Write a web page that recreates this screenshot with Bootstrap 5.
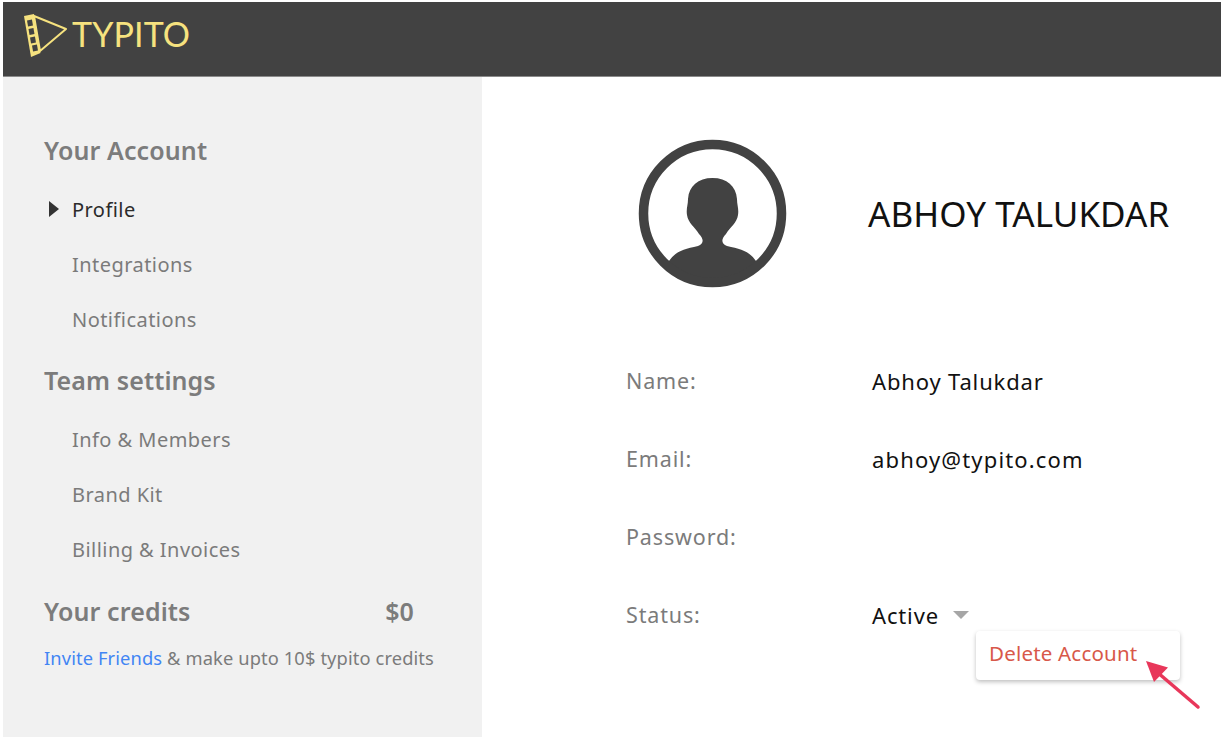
<!DOCTYPE html>
<html lang="en"><head><meta charset="utf-8"><title>Typito</title>
<link href="https://cdn.jsdelivr.net/npm/bootstrap@5.3.0/dist/css/bootstrap.min.css" rel="stylesheet">
<style>
html,body{height:742px;overflow:hidden;background:#fff}
body{font-family:"Noto Sans","Open Sans",sans-serif;padding:2px 3px 5px;letter-spacing:.45px}
.topbar{height:75px;background:#424242;border-bottom:1px solid #8a8a8a;padding:0 0 7px 20px}
.brandname{font-family:"Lato",sans-serif;font-size:34px;line-height:1;color:#f6e27f;letter-spacing:.1px;margin:0 0 4px 1px}
.workspace{height:660px}
.sidepanel{width:479px;background:#f1f1f1;padding:56px 0 0 41px;flex:none}
.sidehead{font-size:25px;line-height:34px;font-weight:600;color:#7c7c7c;margin:0;letter-spacing:.1px}
.sidelink{font-size:20px;line-height:27px;color:#7b7b7b;margin-top:28px;padding-left:28px;position:relative}
.sidehead + .sidelink{margin-top:29px}
.sidelink.current{color:#2b2b2b}
.caret-right{width:0;height:0;border-left:10px solid #333;border-top:8.5px solid transparent;border-bottom:8.5px solid transparent;margin-left:5px}
.caret-slot{position:absolute;left:0;top:5px}
.headgap{margin-top:30px}
.creditrow{width:370px;margin-top:31px}
.invite{font-size:18.3px;line-height:25px;color:#7b7b7b;margin-top:17px;letter-spacing:.12px;white-space:nowrap}
.invite a{color:#4285f4;text-decoration:none}
.mainpane{padding:62px 0 0 144px;position:relative}
.profilehead{height:150px;gap:81px;padding-left:12px}
.fullname{font-size:35px;line-height:48px;color:#111;font-weight:400;margin:0;letter-spacing:.05px;white-space:nowrap}
.inforow{height:78px;align-items:center;font-size:22px;color:#111;margin:0;letter-spacing:.85px}
.infolabel{width:246px;color:#7b7b7b;flex:none;font-size:21.5px}
.mailvalue{letter-spacing:1.15px}
.infolist{margin-top:53px}
.caret-down{width:0;height:0;border-top:8px solid #a6a6a6;border-left:8.5px solid transparent;border-right:8.5px solid transparent;margin-left:14px}
.delmenu{position:absolute;left:494px;top:554px;width:204px;height:49px;background:#fff;border-radius:4px;box-shadow:0 2px 4px rgba(0,0,0,.25);color:#d8584a;font-size:20.5px;line-height:45px;padding-left:13px;white-space:nowrap;letter-spacing:.2px}
.pointer{position:absolute;left:661px;top:581px;overflow:visible}
</style></head>
<body>
<header class="topbar d-flex align-items-center">
<svg width="48" height="44" viewBox="0 0 48 44" fill="none" aria-label="Typito logo">
<path d="M11 2 L43 15 L17 37 Z" stroke="#f6e27f" stroke-width="2" stroke-linejoin="round"/>
<path d="M1 2 L11 0 L17.500 39 L8 43 Z" fill="#f6e27f"/>
<g fill="#424242"><rect x="4.500" y="6" width="5" height="6" transform="rotate(-10 7 9)"/><rect x="6" y="14.500" width="5" height="6" transform="rotate(-10 8.500 17.500)"/><rect x="7.500" y="23" width="5" height="6" transform="rotate(-10 10 26)"/><rect x="9.500" y="31" width="5" height="6" transform="rotate(-10 12 34)"/></g>
</svg>
<span class="brandname">TYPITO</span>
</header>
<div class="workspace d-flex">
<aside class="sidepanel">
<h2 class="sidehead">Your Account</h2>
<div class="sidelink current"><span class="caret-slot"><span class="caret-right d-block"></span></span>Profile</div>
<div class="sidelink">Integrations</div>
<div class="sidelink">Notifications</div>
<h2 class="sidehead headgap">Team settings</h2>
<div class="sidelink">Info &amp; Members</div>
<div class="sidelink">Brand Kit</div>
<div class="sidelink">Billing &amp; Invoices</div>
<div class="creditrow d-flex justify-content-between"><h2 class="sidehead">Your credits</h2><span class="sidehead">$0</span></div>
<div class="invite"><a href="#">Invite Friends</a> &amp; make upto 10$ typito credits</div>
</aside>
<main class="mainpane flex-grow-1">
<div class="profilehead d-flex align-items-center">
<svg width="149" height="150" viewBox="0 0 149 150" aria-label="Avatar">
<defs><clipPath id="clipc"><circle cx="74.500" cy="74.500" r="67"/></clipPath></defs>
<g clip-path="url(#clipc)" fill="#424242">
<path d="M74.500 39 C60 39 51 47 50 60 C50 66 48 70 49 76 C50 84 57 88 61 95 C66 100 66 105 60 107 C46 110 38 112 31 122 L10 150 H139 L118 122 C111 112 103 110 89 107 C83 105 83 100 88 95 C92 88 99 84 100 76 C101 70 99 66 99 60 C98 47 89 39 74.500 39 Z"/>
</g>
<circle cx="74.500" cy="74.500" r="69" fill="none" stroke="#424242" stroke-width="9.500"/>
</svg>
<h1 class="fullname">ABHOY TALUKDAR</h1>
</div>
<div class="infolist">
<div class="inforow d-flex"><span class="infolabel">Name:</span><span>Abhoy Talukdar</span></div>
<div class="inforow d-flex"><span class="infolabel">Email:</span><span class="mailvalue">abhoy@typito.com</span></div>
<div class="inforow d-flex"><span class="infolabel">Password:</span></div>
<div class="inforow d-flex"><span class="infolabel">Status:</span><span>Active</span><span class="caret-down"></span></div>
</div>
<div class="delmenu">Delete Account</div>
<svg class="pointer" width="60" height="54" viewBox="0 0 60 54"><path d="M55 49 L14 14" stroke="#e8375a" stroke-width="3.500" stroke-linecap="round"/><path d="M3 3 L25 9.500 L11 24 Z" fill="#e8375a"/></svg>
</main>
</div>
</body></html>
